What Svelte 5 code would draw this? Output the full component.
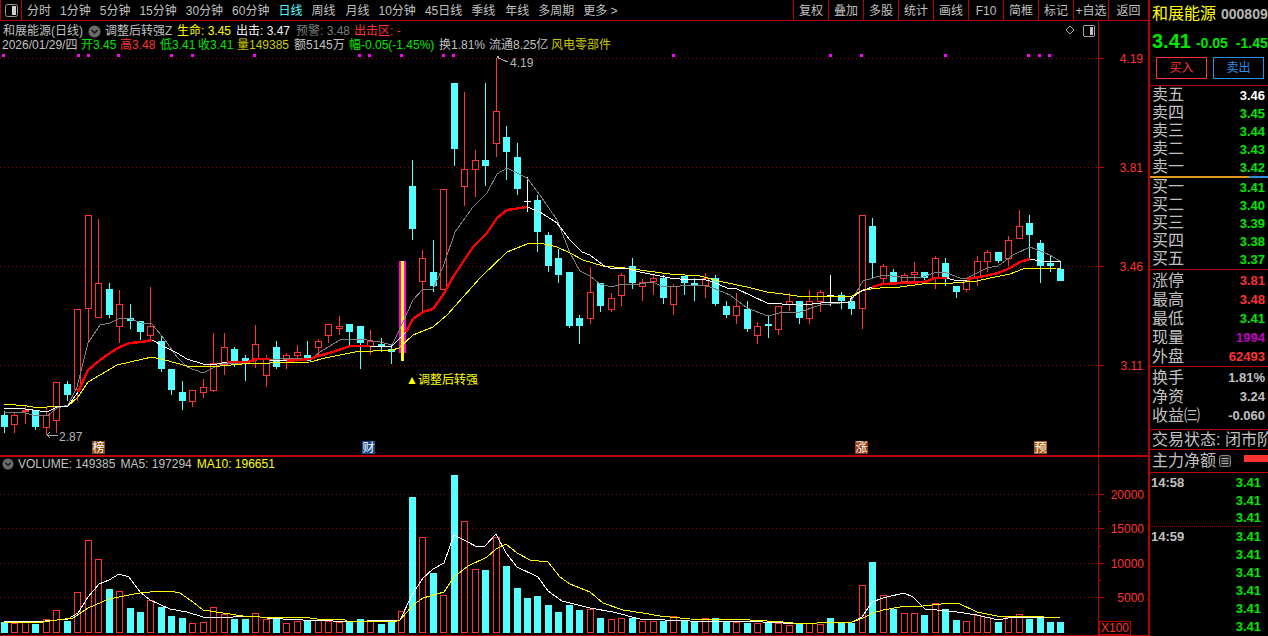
<script>
  const leftTabs = ['分时','1分钟','5分钟','15分钟','30分钟','60分钟','日线','周线','月线','10分钟','45日线','季线','年线','多周期','更多 >'];
  const rightTabs = ['复权','叠加','多股','统计','画线','F10','简框','标记','+自选','返回'];
  // [type, high, bodyTop, bodyBottom, low, volumeTop]  r = hollow red, c = cyan, w = doji
  const K = [
    ['c',411,415,427,433,622],['r',412,415,425,433,623],['r',405,410,412,424,622],['c',410,410,427,430,624],['r',408,415,428,435,619],
    ['r',382,382,421,433,610],['c',381,384,395,401,621],['r',309,309,390,401,592],['r',215,215,309,343,540],['r',219,283,318,318,559],
    ['c',283,289,315,318,589],['r',290,304,327,343,591],['c',304,318,321,329,608],['c',321,321,332,340,612],['r',287,326,336,340,600],
    ['c',336,341,369,372,607],['c',369,369,390,395,616],['c',381,392,401,410,618],['r',390,390,402,407,623],['r',379,387,393,398,622],
    ['r',333,363,391,392,607],['r',333,347,365,375,614],['c',347,349,361,367,619],['c',355,358,361,381,619],['r',325,344,359,368,613],
    ['r',355,359,376,387,619],['c',341,347,367,369,618],['r',353,355,360,369,623],['r',345,352,356,360,621],['c',341,355,361,361,620],
    ['r',339,341,348,355,620],['r',324,324,336,343,621],['r',316,326,329,335,622],['c',324,324,332,345,622],['c',326,326,343,369,619],
    ['r',330,341,347,355,621],['c',338,344,347,352,624],['c',344,349,352,364,622],['x',261,261,353,361,611],['c',160,186,229,240,497],
    ['r',250,258,282,312,537],['c',240,272,286,292,573],['r',189,189,290,290,595],['c',83,83,149,166,475],['r',92,169,187,206,521],
    ['r',150,160,170,197,569],['c',83,160,166,186,570],['r',58,111,144,157,537],['c',126,137,152,180,566],['c',143,157,189,195,588],
    ['w',177,201,201,212,598],['c',195,200,232,252,596],['c',232,235,266,272,605],['c',249,258,275,283,612],['c',272,272,326,328,605],
    ['c',315,318,326,344,610],['r',267,292,319,324,609],['c',283,283,306,312,618],['r',293,298,310,312,619],['r',273,275,296,306,618],
    ['c',258,266,283,289,618],['r',279,282,287,301,621],['r',275,278,282,295,621],['c',275,278,298,304,621],['r',284,286,305,315,616],
    ['c',276,276,283,295,621],['c',278,283,286,301,622],['r',273,278,286,298,618],['c',275,278,304,306,618],['c',301,306,315,318,621],
    ['r',293,306,316,324,622],['c',301,309,329,332,623],['r',322,326,336,344,623],['c',316,324,326,338,623],['r',306,306,330,335,623],
    ['r',293,301,305,311,625],['c',301,301,318,324,623],['r',290,301,319,324,623],['r',290,292,302,312,624],['w',275,295,295,306,618],
    ['c',292,295,301,309,623],['c',297,301,309,315,623],['r',215,215,309,329,585],['c',218,226,263,278,562],['r',264,266,279,283,595],
    ['c',269,272,283,283,609],['r',273,275,282,284,613],['r',262,272,275,283,613],['c',272,272,278,280,615],['r',256,258,278,289,603],
    ['c',258,263,278,286,609],['c',286,286,292,298,620],['r',280,280,290,292,621],['r',256,261,278,286,615],['r',250,252,262,272,617],
    ['c',252,252,261,263,622],['r',236,240,259,266,617],['r',210,226,239,239,614],['c',215,223,235,258,619],['c',240,243,266,283,616],
    ['c',255,263,266,272,622],['c',261,269,281,281,622]
  ];
  const cxOf = (i) => Math.floor(4.5 + i * 10.46);

  const z = (ox, oy, pts) => {
    const out = [];
    for (let i = 0; i < pts.length; i += 2) out.push(Math.round(ox + pts[i] / 3) + ',' + Math.round(oy + pts[i + 1] / 3));
    return out;
  };
  const pl = (...parts) => parts.flat().join(' ');

  const gray = pl(
    z(0,200,[13,635,75,640,100,645,140,647,170,625,203,615,230,560,265,430,300,375,330,368,360,354,390,358,425,368,455,372,495,420,530,470,560,500,610,520,640,505,670,490,700,490,740,490,770,480,800,477]),
    z(270,50,[0,930,60,925,125,925,160,900,210,870,270,868,330,875,365,885,385,850,430,750,460,718,490,718,520,650,555,545,610,470,650,430,680,372,710,355,770,385,810,435,860,510,900,610]),
    z(570,200,[30,213,60,228,90,252,125,262,155,253,210,253,250,245,280,260,330,257,400,255,430,263,480,285,530,325,595,347,640,337,690,335,750,315,840,305]),
    z(850,200,[0,310,40,242,100,225,150,232,220,232,260,215,290,220,330,235,350,235,410,205,445,198,490,165,540,142,600,165,634,185])
  );
  const yellow = pl(
    z(0,200,[12,613,80,617,100,622,140,622,170,617,205,617,235,590,265,545,300,525,350,495,390,485,455,472,495,480,560,497,610,502,660,497,760,490,810,490]),
    z(270,50,[0,940,120,937,165,925,255,907,365,900,387,893,430,855,490,830,530,795,630,685,710,605,770,582,810,580,860,590,900,610]),
    z(570,200,[40,180,100,197,165,205,230,212,300,222,390,227,460,245,530,260,590,277,640,282,680,289,800,289,840,292]),
    z(850,200,[0,290,40,270,90,263,150,260,240,250,310,248,380,243,420,235,480,222,520,208,620,205,634,208])
  );
  const ma10 = [
    { red:false, pts: pl(z(0,200,[12,625,75,628,100,630,140,635,170,622,205,617,235,575])) },
    { red:true,  pts: pl(z(0,200,[235,575,265,510,300,480,330,460,360,442,390,428,425,425,455,420])) },
    { red:false, pts: pl(z(0,200,[455,420,495,440,530,460,560,478,610,493,650,493,680,487])) },
    { red:true,  pts: pl(z(0,200,[680,487,740,485,770,478,810,477])) },
    { red:false, pts: pl(z(270,50,[0,932,50,930])) },
    { red:true,  pts: pl(z(270,50,[50,932,120,928,145,918,190,905,240,888,300,888])) },
    { red:false, pts: pl(z(270,50,[300,888,365,888,385,870,408,845])) },
    { red:true,  pts: pl(z(270,50,[408,845,430,808,460,785,490,777,520,735,550,680,610,590,650,550,680,505,710,480,770,470])) },
    { red:false, pts: pl(z(270,50,[770,470,810,485,860,520,900,570]), z(570,200,[35,155,60,165,100,195,120,203,165,205,210,215,270,228,300,233,330,237,400,238,430,245,470,265,500,268,590,310,680,315,700,316,780,305,840,305]), z(850,200,[0,298,30,275,65,262])) },
    { red:true,  pts: pl(z(850,200,[65,262,100,253,160,250,225,245,255,235,290,233])) },
    { red:false, pts: pl(z(850,200,[290,235,320,242,350,240])) },
    { red:true,  pts: pl(z(850,200,[350,238,390,230,445,218,480,205,510,185,540,178])) },
    { red:false, pts: pl(z(850,200,[540,178,570,183,610,183,634,187])) }
  ];
  const volWhite = pl(
    z(0,455,[12,497,30,499,100,501,170,494,205,492,235,475,265,425,298,387,328,375,358,358,388,365,420,410,450,436,510,462,560,470,610,487,700,487,760,482,800,488,850,492,910,496,1000,498,1100,497,1190,495]),
    z(400,455,[0,495,35,420,70,370,100,342,133,323,163,241,205,260,230,277,256,273,289,238,319,293,350,335,415,367,445,407,485,438,570,460,640,470,720,492,870,497,1050,497]),
    z(750,455,[40,500,100,505,200,503,305,500,335,485,367,440,400,430,463,415,490,425,526,463,560,466,620,472,680,480,745,494,775,490,830,487,910,488])
  );
  const volYellow = pl(
    z(0,455,[12,500,130,500,170,495,220,490,265,460,328,433,388,420,420,415,450,412,510,408,540,415,580,440,610,465,670,475,730,482,780,485,840,488,880,487,930,488,950,493,1030,493,1040,497,1130,497,1190,498]),
    z(400,455,[0,495,40,450,70,430,133,412,163,365,205,333,260,305,289,282,319,268,350,295,390,315,445,321,480,365,510,388,570,410,610,443,670,465,730,475,780,482,870,493,1050,496]),
    z(750,455,[100,500,130,503,200,505,230,502,305,500,340,490,370,475,400,465,450,457,520,454,600,443,625,443,680,470,740,482,830,484,930,490])
  );

  const dots = [3,78,88,118,171,192,254,359,369,401,443,453,673,830,861,945,1028,1039,1049];
  const priceGrid = [[58,'4.19'],[167,'3.81'],[266,'3.46'],[365,'3.11']];
  const volGrid = [[494,'20000'],[528,'15000'],[563,'10000'],[597,'5000']];
  const volMinor = [511,546,580];
  const flags = [[92,'榜','#8b4a10'],[362,'财','#184a8c'],[855,'涨','#9a3a10'],[1034,'预','#a85a10']];

  const asks = [['卖五','3.46','white'],['卖四','3.45','green'],['卖三','3.44','green'],['卖二','3.43','green'],['卖一','3.42','green']];
  const bids = [['买一','3.41'],['买二','3.40'],['买三','3.39'],['买四','3.38'],['买五','3.37']];
  const stats = [['涨停','3.81','red'],['最高','3.48','red'],['最低','3.41','green'],['现量','1994','purple'],['外盘','62493','red']];
  const extra = [['换手','1.81%'],['净资','3.24'],['收益㈢','-0.060']];
  const ticks = [['14:58',false],['',false],['',true],['14:59',false],['',false],['',false],['',false],['',false],['',false]];
</script>

<div class="app">
  <div class="left">
    <div class="toolbar">
      <div class="corner">
        <svg width="13" height="13" viewBox="0 0 13 13"><rect x="0.5" y="0.5" width="12" height="12" rx="2" fill="none" stroke="#9a9a9a"/><rect x="7" y="2" width="4" height="9" fill="#d0d0d0"/></svg>
      </div>
      <div class="tabs">
        {#each leftTabs as t}
          <span class:active={t === '日线'}>{t}</span>
        {/each}
      </div>
      <div class="tools">
        {#each rightTabs as t}
          <span class="tool">{t}</span>
        {/each}
      </div>
    </div>

    <div class="pane main">
      <svg class="chart" width="1098" height="434" viewBox="0 21 1098 434">
        {#each priceGrid as g}
          <line class="grid" x1="0" x2="1098" y1={g[0] + 0.5} y2={g[0] + 0.5} />
        {/each}
        {#each dots as d}
          <rect x={d - 1} y="54" width="3" height="3" fill="#ff00ff" />
        {/each}
        {#each K as k, i}
          {@const cx = cxOf(i)}
          {#if k[0] === 'x'}
            <rect x="399" y="261" width="7" height="92" fill="#ff00ff" />
            <rect x="401" y="261" width="3" height="100" fill="#ffff00" />
          {:else if k[0] === 'c'}
            <rect x={cx} y={k[1]} width="1" height={k[4] - k[1]} fill="#55ffff" />
            <rect x={cx - 3} y={k[2]} width="7" height={k[3] - k[2]} fill="#55ffff" />
          {:else if k[0] === 'w'}
            <rect x={cx} y={k[1]} width="1" height={k[4] - k[1]} fill="#ffffff" />
            <rect x={cx - 3} y={k[2]} width="7" height="1" fill="#ffffff" />
          {:else}
            <rect x={cx} y={k[1]} width="1" height={k[2] - k[1]} fill="#ff3232" />
            <rect x={cx} y={k[3]} width="1" height={k[4] - k[3]} fill="#ff3232" />
            <rect class="hollow" x={cx - 2.5} y={k[2] + 0.5} width="6" height={k[3] - k[2] - 1} />
          {/if}
        {/each}
        <polyline class="ln gray" points={gray} />
        <polyline class="ln yellow" points={yellow} />
        {#each ma10 as s}
          <polyline class={s.red ? 'ln thickred' : 'ln thickwhite'} points={s.pts} />
        {/each}

        <polyline class="mark" points="497,57 503,60 508,62" />
        <polyline class="mark" points="499,59 497,57 499,56" />
        <text class="note" x="510" y="67">4.19</text>
        <polyline class="mark" points="47,435 58,435" />
        <polyline class="mark" points="50,432 47,435 50,438" />
        <text class="note" x="59" y="441">2.87</text>
        <text class="sig" x="406" y="384">▲调整后转强</text>

        {#each flags as f}
          <rect x={f[0]} y="441" width="13" height="13" fill={f[2]} />
          <text class="flag" x={f[0] + 6.5} y="452">{f[1]}</text>
        {/each}

        <polygon class="mark" points="1070,26 1074,30 1070,34 1066,30" />
        <rect class="mark" x="1083.5" y="25.5" width="11" height="11" rx="2" />
        <rect x="1090" y="27" width="3" height="8" fill="#c0c0c0" />
      </svg>
      <svg class="axis" width="49" height="434" viewBox="1099 21 49 434">
        {#each priceGrid as g}
          <line class="tick" x1="1099" x2="1104" y1={g[0] + 0.5} y2={g[0] + 0.5} />
          <text class="axt" x="1143" y={g[0] + 5}>{g[1]}</text>
        {/each}
      </svg>
      <div class="head">
        <div class="hrow">
          <span class="g nm">和展能源(日线)</span>
          <svg class="chev" width="13" height="13" viewBox="0 0 13 13"><circle cx="6.5" cy="6.5" r="6" fill="#6a6a6a"/><polyline points="3.5,5 6.5,8 9.5,5" fill="none" stroke="#111" stroke-width="1.4"/></svg>
          <span class="g f1">调整后转强Z</span>
          <span class="y f2">生命: 3.45</span>
          <span class="w f3">出击: 3.47</span>
          <span class="d f4">预警: 3.48</span>
          <span class="r f5">出击区: -</span>
        </div>
        <div class="hrow info">
          <span class="g i0">2026/01/29/四</span>
          <span class="gr i1">开3.45</span>
          <span class="i2"><span class="r">高3.48</span></span>
          <span class="gr i3">低3.41</span>
          <span class="gr i4">收3.41</span>
          <span class="dy i5">量149385</span>
          <span class="g i6">额5145万</span>
          <span class="gr i7">幅-0.05(-1.45%)</span>
          <span class="g i8">换1.81%</span>
          <span class="g i9">流通8.25亿</span>
          <span class="dy i10">风电零部件</span>
        </div>
      </div>
    </div>

    <div class="pane vol">
      <svg class="chart" width="1098" height="178" viewBox="0 457 1098 178">
        {#each volGrid as g}
          <line class="grid" x1="0" x2="1098" y1={g[0] + 0.5} y2={g[0] + 0.5} />
        {/each}
        {#each K as k, i}
          {@const cx = cxOf(i)}
          {#if k[0] === 'r' || k[0] === 'x'}
            <rect class="hollow" x={cx - 2.5} y={k[5] + 0.5} width="6" height={633 - k[5] - 1} />
          {:else}
            <rect x={cx - 3} y={k[5]} width="7" height={633 - k[5]} fill="#55ffff" />
          {/if}
        {/each}
        <polyline class="ln whitev" points={volWhite} />
        <polyline class="ln yellow" points={volYellow} />
      </svg>
      <svg class="axis" width="49" height="178" viewBox="1099 457 49 178">
        {#each volGrid as g}
          <line class="tick" x1="1099" x2="1104" y1={g[0] + 0.5} y2={g[0] + 0.5} />
          <text class="axt" x="1144" y={g[0] + 5}>{g[1]}</text>
        {/each}
        {#each volMinor as m}
          <line class="tick" x1="1099" x2="1101" y1={m + 0.5} y2={m + 0.5} />
        {/each}
        <rect class="xbox" x="1099.5" y="621.5" width="31" height="13" />
        <text class="axt xtxt" x="1115" y="632">X100</text>
      </svg>
      <div class="vhead">
        <svg class="chev" width="12" height="12" viewBox="0 0 13 13"><circle cx="6.5" cy="6.5" r="6" fill="#6a6a6a"/><polyline points="3.5,5 6.5,8 9.5,5" fill="none" stroke="#111" stroke-width="1.4"/></svg>
        <span class="g">VOLUME: 149385</span>
        <span class="g">MA5: 197294</span>
        <span class="y">MA10: 196651</span>
      </div>
    </div>
  </div>

  <div class="panel">
    <div class="title">
      <div class="name"><span>和展能源</span><b>000809</b></div>
      <div class="quote"><strong>3.41</strong><b>-0.05</b><b>-1.45</b></div>
      <div class="btns"><span class="buy">买入</span><span class="sell">卖出</span></div>
    </div>
    <div class="sec asks">
      {#each asks as r}
        <div class="row r18"><span class="lb">{r[0]}</span><span class="val {r[2]}">{r[1]}</span></div>
      {/each}
    </div>
    <div class="sec bids">
      {#each bids as r}
        <div class="row r18"><span class="lb">{r[0]}</span><span class="val green">{r[1]}</span></div>
      {/each}
    </div>
    <div class="sec stats">
      {#each stats as r}
        <div class="row r19"><span class="lb">{r[0]}</span><span class="val {r[2]}">{r[1]}</span></div>
      {/each}
    </div>
    <div class="sec extra">
      {#each extra as r}
        <div class="row r19"><span class="lb">{r[0]}</span><span class="val gray">{r[1]}</span></div>
      {/each}
    </div>
    <div class="sec state"><span class="lb">交易状态: 闭市阶段</span></div>
    <div class="sec flow">
      <span class="lb">主力净额</span>
      <svg width="12" height="12" viewBox="0 0 12 12"><rect x="0.5" y="0.5" width="11" height="11" rx="2" fill="#222" stroke="#8a8a8a"/><path d="M2.5 3.5h7M2.5 6h7M2.5 8.5h7" stroke="#b0b0b0"/></svg>
      <i class="bar"></i>
    </div>
    <div class="ticks">
      {#each ticks as t}
        <div class="row r18 tk" class:sep={t[1]}><span class="time">{t[0]}</span><span class="val green">3.41</span></div>
      {/each}
    </div>
  </div>
</div>

<style>
  :global(body) { margin: 0; background: #000; }
  .app {
    display: flex; width: 1268px; height: 636px; overflow: hidden; background: #000;
    font-family: "Liberation Sans", "Noto Sans CJK SC", sans-serif; font-size: 12px; color: #c0c0c0; line-height: 1;
  }
  .left { width: 1148px; height: 636px; flex: none; border-right: 2px solid #b80000; }

  .toolbar { display: flex; align-items: center; height: 20px; border-bottom: 1px solid #b80000; }
  .corner { width: 22px; height: 20px; flex: none; box-sizing: border-box; border-left: 1px solid #b80000; border-right: 1px solid #b80000; display: flex; align-items: center; justify-content: center; }
  .tabs { display: flex; gap: 9px; padding: 1px 0 0 5px; white-space: nowrap; font-size: 12px; }
  .tabs .active { color: #55ffff; }
  .tabs span:nth-child(9), .tabs span:nth-child(13) { margin-left: 1px; }
  .tools { display: flex; margin-left: auto; height: 20px; }
  .tool { width: 34px; padding-top: 1px; box-sizing: content-box; height: 19px; border-left: 1px solid #b80000; display: flex; align-items: center; justify-content: center; }
  .tool:last-child { width: 39px; }

  .pane { position: relative; display: flex; }
  .main { height: 434px; border-bottom: 2px solid #b80000; }
  .vol { height: 178px; border-bottom: 1px solid #b80000; }
  .chart { display: block; flex: none; shape-rendering: crispEdges; }
  .axis { display: block; flex: none; border-left: 1px solid #b80000; }

  .grid { stroke: #8f0000; stroke-width: 1; stroke-dasharray: 1 3; }
  .hollow { fill: #000; stroke: #ff3232; stroke-width: 1; }
  .ln { fill: none; stroke-linejoin: round; }
  .gray { stroke: #808080; stroke-width: 1; }
  .yellow { stroke: #ffff00; stroke-width: 1; }
  .thickred { stroke: #ff0000; stroke-width: 2.4; }
  .thickwhite { stroke: #ffffff; stroke-width: 1; }
  .whitev { stroke: #ffffff; stroke-width: 1; }
  .mark { fill: none; stroke: #a8a8a8; stroke-width: 1; }
  .note { fill: #b8b8b8; font-size: 12px; }
  .sig { fill: #ffff00; font-size: 12px; }
  .flag { fill: #fff; font-size: 12px; text-anchor: middle; }
  .tick { stroke: #c00000; stroke-width: 1; }
  .axt { fill: #ff3232; font-size: 12px; text-anchor: end; }
  .xtxt { text-anchor: middle; }
  .xbox { fill: none; stroke: #b80000; stroke-width: 1; }

  .head { position: absolute; left: 0; top: 0; width: 1098px; }
  .hrow { position: relative; height: 14px; white-space: nowrap; }
  .head .hrow:first-child { margin-top: 4px; }
  .hrow > span, .hrow > svg { position: absolute; top: 0; }
  .g { color: #c0c0c0; }
  .y { color: #ffff00; }
  .w { color: #f0f0f0; }
  .d { color: #7c7c7c; }
  .r { color: #ff3232; }
  .gr { color: #00e600; }
  .dy { color: #c8c800; }
  .nm { left: 3px; } .hrow > .chev { left: 88px; top: 0; } .f1 { left: 105px; } .f2 { left: 177px; } .f3 { left: 236px; } .f4 { left: 296px; } .f5 { left: 354px; }
  .i0 { left: 2px; } .i1 { left: 81px; } .i2 { left: 120px; } .i3 { left: 160px; } .i4 { left: 198px; } .i5 { left: 237px; } .i6 { left: 294px; } .i7 { left: 349px; } .i8 { left: 439px; } .i9 { left: 489px; } .i10 { left: 551px; }

  .vhead { position: absolute; left: 2px; top: 0; height: 14px; display: flex; align-items: center; gap: 5px; white-space: nowrap; }
  .vhead .chev { margin-right: -1px; }

  .panel { width: 118px; flex: none; height: 636px; overflow: hidden; }
  .title { height: 86px; box-sizing: border-box; padding-top: 4px; border-bottom: 1px solid #b80000; }
  .name { display: flex; align-items: center; height: 20px; padding-left: 2px; gap: 5px; white-space: nowrap; }
  .name span { color: #ffff00; font-size: 16px; }
  .name b { color: #b8b8b8; font-size: 14px; }
  .quote { display: flex; align-items: baseline; height: 24px; padding: 7px 0 0 2px; box-sizing: border-box; gap: 8px; white-space: nowrap; color: #00e600; }
  .quote strong { font-size: 20px; margin-right: -3px; }
  .quote b { font-size: 14px; }
  .btns { display: flex; gap: 6px; padding: 9px 0 0 6px; }
  .btns span { width: 51px; height: 22px; box-sizing: border-box; display: flex; align-items: center; justify-content: center; border: 1px solid; }
  .buy { color: #ff3232; border-color: #ff3232; }
  .sell { color: #2e8fe0; border-color: #2e8fe0; }

  .sec { box-sizing: border-box; padding: 0 3px 0 2px; }
  .asks { height: 92px; border-bottom: 2px solid; border-image: linear-gradient(90deg, #e09a20 83%, #2e8fe0 83%) 1; padding-top: 0; }
  .bids { height: 92px; border-bottom: 1px solid #b80000; }
  .stats { height: 97px; border-bottom: 1px solid #b80000; padding-top: 1px; }
  .extra { height: 63px; border-bottom: 1px solid #b80000; padding-top: 1px; }
  .state { height: 20px; border-bottom: 1px solid #b80000; white-space: nowrap; overflow: hidden; display: flex; align-items: center; }
  .flow { height: 23px; border-bottom: 1px solid #b80000; display: flex; align-items: center; gap: 3px; position: relative; white-space: nowrap; }
  .bar { position: absolute; right: 0; top: 5px; width: 24px; height: 7px; background: #ff3232; }
  .row { display: flex; justify-content: space-between; align-items: center; }
  .r18 { height: 18px; }
  .r19 { height: 19px; }
  .lb { font-size: 16px; color: #c0c0c0; }
  .val { font-size: 13px; font-weight: 700; }
  .white { color: #fff; }
  .green { color: #00e600; }
  .red { color: #ff3232; }
  .purple { color: #c000c0; }
  .gray { color: #c0c0c0; }
  .ticks { padding: 0 7px 0 1px; }
  .tk { box-sizing: border-box; }
  .sep { border-bottom: 1px dotted #a00000; }
  .time { font-size: 13px; font-weight: 700; color: #c0c0c0; }
</style>
